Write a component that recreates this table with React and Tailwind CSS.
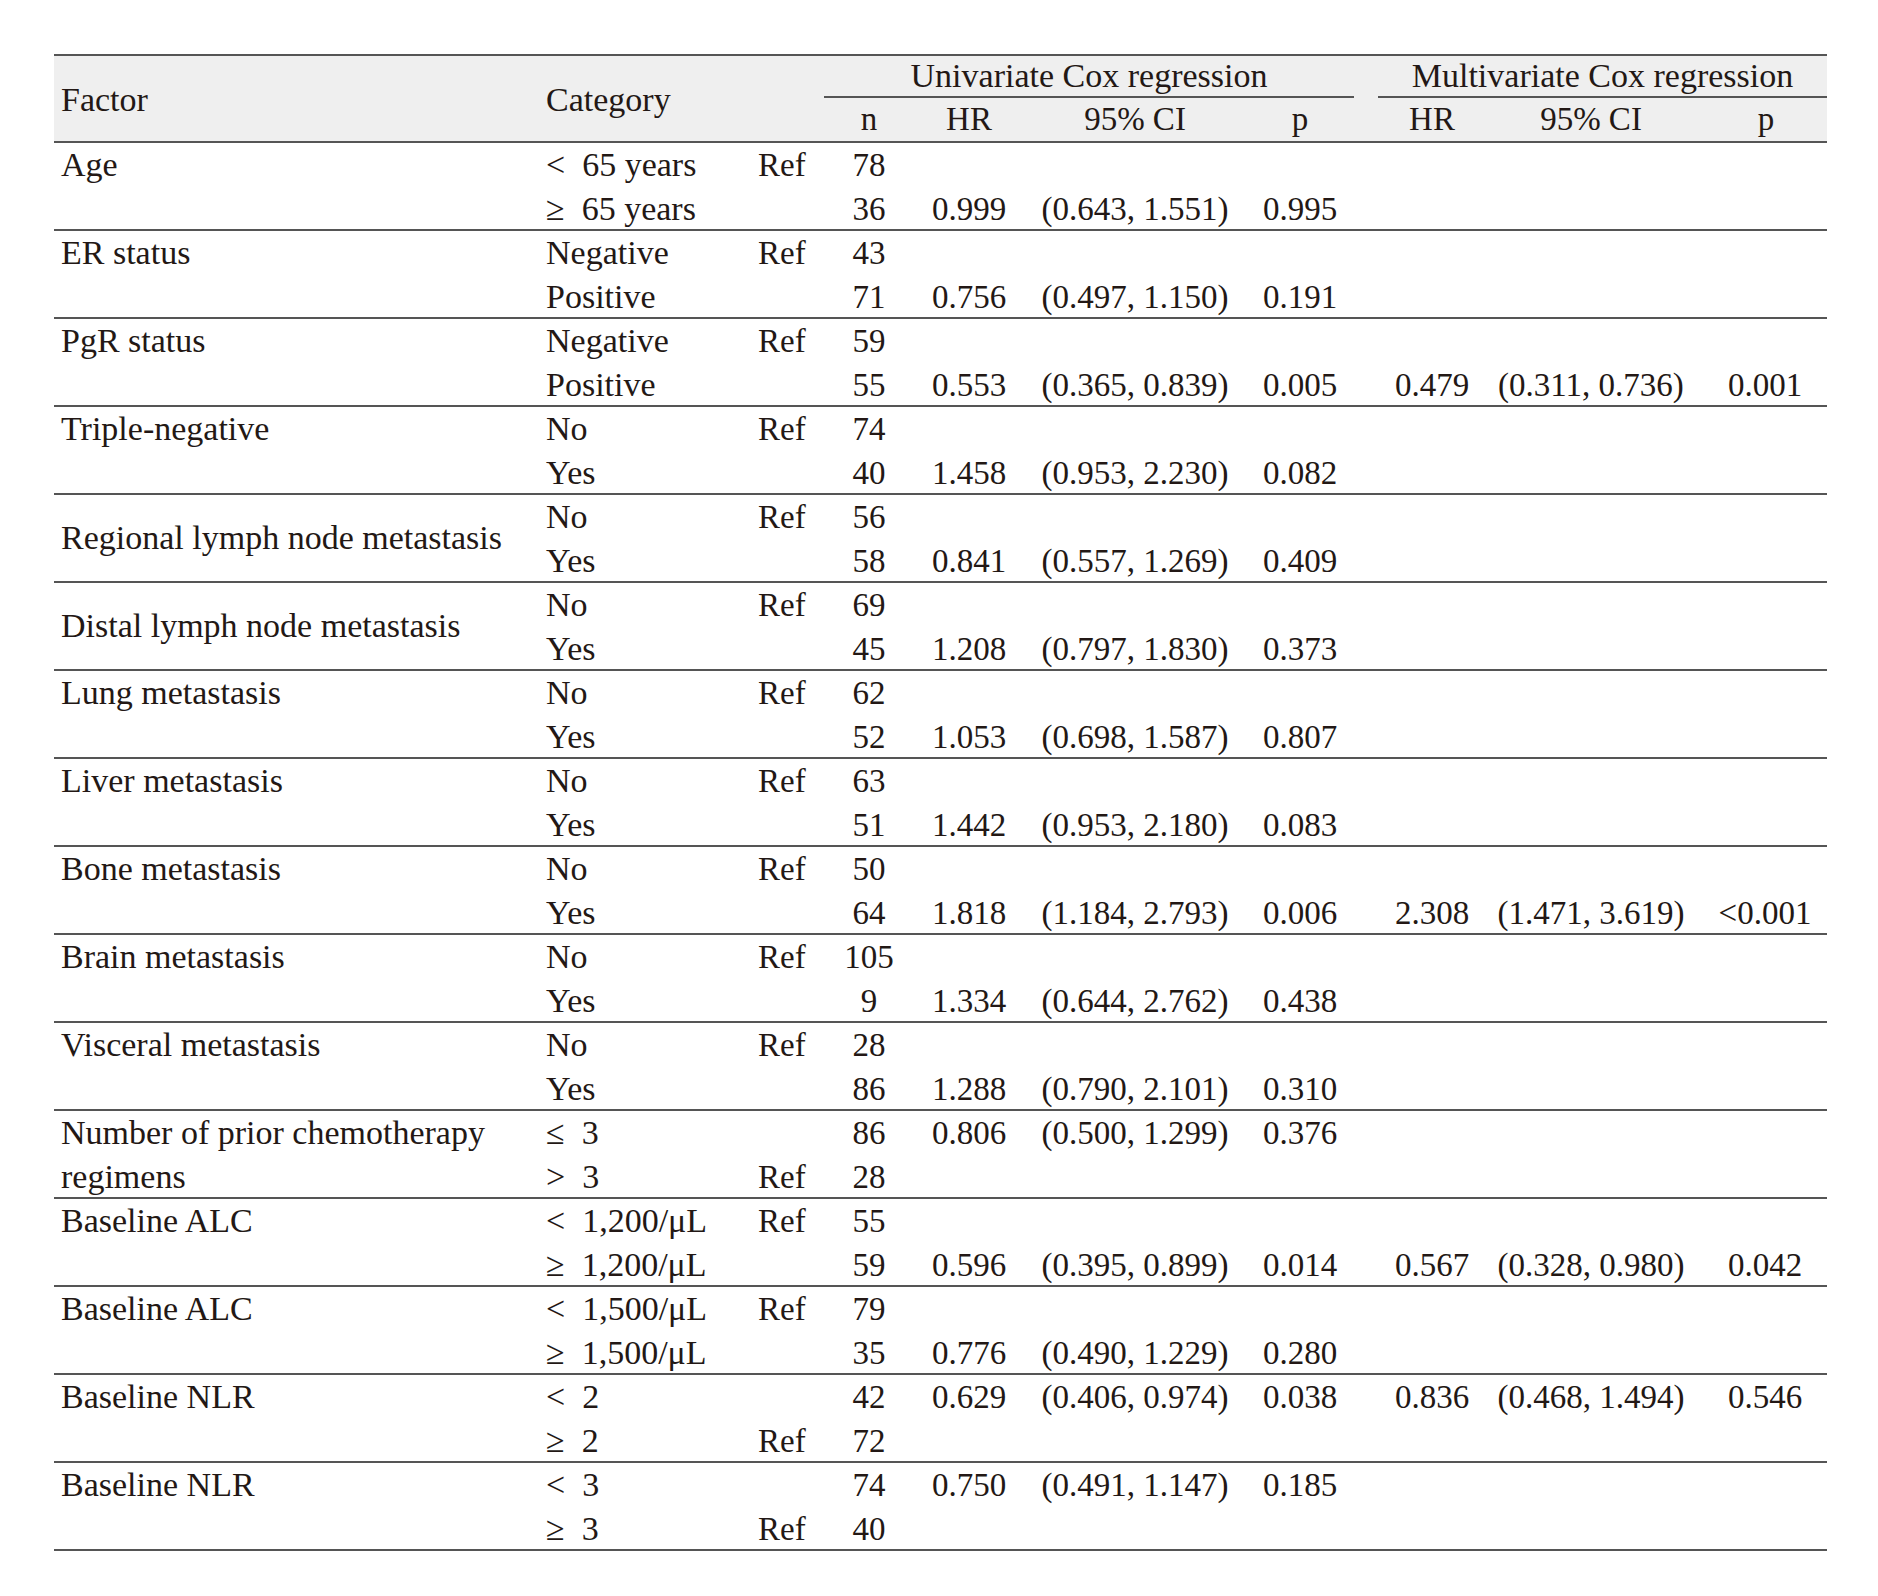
import React from "react";

const COLS =
  "grid grid-cols-[484px_212px_74px_90px_110px_222px_108px_24px_108px_210px_131px]";

const E = "\u2002";

const groups = [
  {
    f: "Age",
    rows: [
      [`<${E}65 years`, "Ref", "78"],
      [`≥${E}65 years`, "", "36", "0.999", "(0.643, 1.551)", "0.995"],
    ],
  },
  {
    f: "ER status",
    rows: [
      ["Negative", "Ref", "43"],
      ["Positive", "", "71", "0.756", "(0.497, 1.150)", "0.191"],
    ],
  },
  {
    f: "PgR status",
    rows: [
      ["Negative", "Ref", "59"],
      ["Positive", "", "55", "0.553", "(0.365, 0.839)", "0.005", "0.479", "(0.311, 0.736)", "0.001"],
    ],
  },
  {
    f: "Triple-negative",
    rows: [
      ["No", "Ref", "74"],
      ["Yes", "", "40", "1.458", "(0.953, 2.230)", "0.082"],
    ],
  },
  {
    f: "Regional lymph node metastasis",
    center: true,
    rows: [
      ["No", "Ref", "56"],
      ["Yes", "", "58", "0.841", "(0.557, 1.269)", "0.409"],
    ],
  },
  {
    f: "Distal lymph node metastasis",
    center: true,
    rows: [
      ["No", "Ref", "69"],
      ["Yes", "", "45", "1.208", "(0.797, 1.830)", "0.373"],
    ],
  },
  {
    f: "Lung metastasis",
    rows: [
      ["No", "Ref", "62"],
      ["Yes", "", "52", "1.053", "(0.698, 1.587)", "0.807"],
    ],
  },
  {
    f: "Liver metastasis",
    rows: [
      ["No", "Ref", "63"],
      ["Yes", "", "51", "1.442", "(0.953, 2.180)", "0.083"],
    ],
  },
  {
    f: "Bone metastasis",
    rows: [
      ["No", "Ref", "50"],
      ["Yes", "", "64", "1.818", "(1.184, 2.793)", "0.006", "2.308", "(1.471, 3.619)", "<0.001"],
    ],
  },
  {
    f: "Brain metastasis",
    rows: [
      ["No", "Ref", "105"],
      ["Yes", "", "9", "1.334", "(0.644, 2.762)", "0.438"],
    ],
  },
  {
    f: "Visceral metastasis",
    rows: [
      ["No", "Ref", "28"],
      ["Yes", "", "86", "1.288", "(0.790, 2.101)", "0.310"],
    ],
  },
  {
    f: ["Number of prior chemotherapy", "regimens"],
    rows: [
      [`≤${E}3`, "", "86", "0.806", "(0.500, 1.299)", "0.376"],
      [`>${E}3`, "Ref", "28"],
    ],
  },
  {
    f: "Baseline ALC",
    rows: [
      [`<${E}1,200/μL`, "Ref", "55"],
      [`≥${E}1,200/μL`, "", "59", "0.596", "(0.395, 0.899)", "0.014", "0.567", "(0.328, 0.980)", "0.042"],
    ],
  },
  {
    f: "Baseline ALC",
    rows: [
      [`<${E}1,500/μL`, "Ref", "79"],
      [`≥${E}1,500/μL`, "", "35", "0.776", "(0.490, 1.229)", "0.280"],
    ],
  },
  {
    f: "Baseline NLR",
    rows: [
      [`<${E}2`, "", "42", "0.629", "(0.406, 0.974)", "0.038", "0.836", "(0.468, 1.494)", "0.546"],
      [`≥${E}2`, "Ref", "72"],
    ],
  },
  {
    f: "Baseline NLR",
    rows: [
      [`<${E}3`, "", "74", "0.750", "(0.491, 1.147)", "0.185"],
      [`≥${E}3`, "Ref", "40"],
    ],
  },
];

function SubRow({ r, second }) {
  const row = second ? "row-start-2" : "row-start-1";
  const v = (i) => r[i] || "";
  return (
    <>
      <div className={`${row} col-start-2 pl-[8px] whitespace-nowrap text-[34px]`}>{v(0)}</div>
      <div className={`${row} col-start-3 pl-[8px]`}>{v(1)}</div>
      <div className={`${row} col-start-4 text-center`}>{v(2)}</div>
      <div className={`${row} col-start-5 text-center`}>{v(3)}</div>
      <div className={`${row} col-start-6 text-center whitespace-nowrap`}>{v(4)}</div>
      <div className={`${row} col-start-7 text-center`}>{v(5)}</div>
      <div className={`${row} col-start-9 text-center`}>{v(6)}</div>
      <div className={`${row} col-start-10 text-center whitespace-nowrap`}>{v(7)}</div>
      <div className={`${row} col-start-11 text-center pl-[7px]`}>{v(8)}</div>
    </>
  );
}

function Group({ g }) {
  return (
    <div className={`${COLS} grid-rows-[44px_42px] h-[88px] border-b-2 border-[#555555] leading-[44px]`}>
      <div
        className={`row-start-1 row-span-2 col-start-1 pl-[7px] text-[34px] ${
          g.center ? "flex items-center" : ""
        }`}
      >
        {Array.isArray(g.f) ? (
          <div>
            {g.f[0]}
            <br />
            {g.f[1]}
          </div>
        ) : (
          <div>{g.f}</div>
        )}
      </div>
      <SubRow r={g.rows[0]} />
      <SubRow r={g.rows[1]} second />
    </div>
  );
}

export default function App() {
  return (
    <div className="min-h-[1596px] bg-white pt-[54px] pl-[54px] font-['Liberation_Serif',serif] text-[33px] text-[#231815]">
      <div className="w-[1773px]">
        <div
          className={`${COLS} grid-rows-[42px_43px] bg-[#efefef] border-t-2 border-b-2 border-[#555555]`}
        >
          <div className="row-start-1 row-span-2 col-start-1 flex items-center pl-[7px] pt-[3px] leading-[40px] text-[34px]">
            Factor
          </div>
          <div className="row-start-1 row-span-2 col-start-2 col-span-2 flex items-center pl-[8px] pt-[3px] leading-[40px] text-[34px]">
            Category
          </div>
          <div className="row-start-1 col-start-4 col-span-4 border-b-2 border-[#555555] text-center leading-[40px] whitespace-nowrap text-[34px]">
            Univariate Cox regression
          </div>
          <div className="row-start-1 col-start-9 col-span-3 border-b-2 border-[#555555] text-center leading-[40px] whitespace-nowrap text-[34px]">
            Multivariate Cox regression
          </div>
          <div className="row-start-2 col-start-4 text-center leading-[43px]">n</div>
          <div className="row-start-2 col-start-5 text-center leading-[43px]">HR</div>
          <div className="row-start-2 col-start-6 text-center leading-[43px]">95% CI</div>
          <div className="row-start-2 col-start-7 text-center leading-[43px]">p</div>
          <div className="row-start-2 col-start-9 text-center leading-[43px]">HR</div>
          <div className="row-start-2 col-start-10 text-center leading-[43px]">95% CI</div>
          <div className="row-start-2 col-start-11 text-center pl-[9px] leading-[43px]">p</div>
        </div>
        {groups.map((g, i) => (
          <Group key={i} g={g} />
        ))}
      </div>
    </div>
  );
}
